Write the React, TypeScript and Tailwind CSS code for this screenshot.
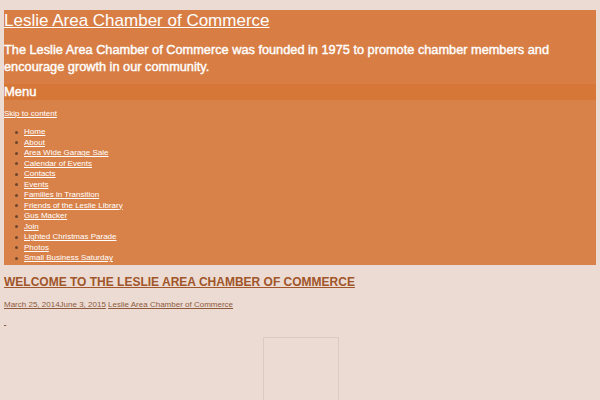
const menu = [
  'Home',
  'About',
  'Area Wide Garage Sale',
  'Calendar of Events',
  'Contacts',
  'Events',
  'Families in Transition',
  'Friends of the Leslie Library',
  'Gus Macker',
  'Join',
  'Lighted Christmas Parade',
  'Photos',
  'Small Business Saturday',
];

export default function App() {
  return (
    <div className="h-[400px] bg-[#ecdbd2] pt-[10px] px-[4px] overflow-hidden" style={{ fontFamily: "'Liberation Sans', Arial, sans-serif" }}>
      {/* Header */}
      <div className="bg-[#d87e45] text-white">
        <h1 className="text-[17px] leading-[22px]">
          <a href="#" className="underline">Leslie Area Chamber of Commerce</a>
        </h1>
        <p className="text-[12.75px] leading-[17px] mt-[9px] pb-[9px] [-webkit-text-stroke:0.4px_white]">
          The Leslie Area Chamber of Commerce was founded in 1975 to promote chamber members and encourage growth in our community.
        </p>
        <div className="bg-[#d67737] text-[13px] leading-[16px] [-webkit-text-stroke:0.4px_white]">Menu</div>
        <div className="bg-[#d8824a] pb-[1px]">
          <a href="#" className="block text-[8px] leading-[12px] pt-[8px] underline">Skip to content</a>
          <ul className="mt-[7px] text-[8px] leading-[10.5px]">
            {menu.map((m) => (
              <li key={m} className="flex items-center">
                <span className="ml-[11px] mr-[6px] w-[3px] h-[3px] rounded-full bg-[#6b4530]" />
                <a href="#" className="underline">{m}</a>
              </li>
            ))}
          </ul>
        </div>
      </div>

      {/* Post */}
      <h2 className="mt-[10px] text-[12px] leading-[14px] font-bold uppercase text-[#a0552a]">
        <a href="#" className="underline">Welcome to the Leslie Area Chamber of Commerce</a>
      </h2>
      <div className="mt-[10.5px] text-[8px] leading-[11px] text-[#8c5a3e]">
        <a href="#" className="underline">March 25, 2014June 3, 2015</a>{' '}
        <a href="#" className="underline">Leslie Area Chamber of Commerce</a>
      </div>
      <div className="mt-[6px] text-[8px] leading-[11px] text-[#8c5a3e]">
        <a href="#" className="underline">&nbsp;</a>
      </div>
      <div className="mt-[10px] ml-[259px] w-[76px] h-[100px] border border-[#dccbc2]" />
    </div>
  );
}
